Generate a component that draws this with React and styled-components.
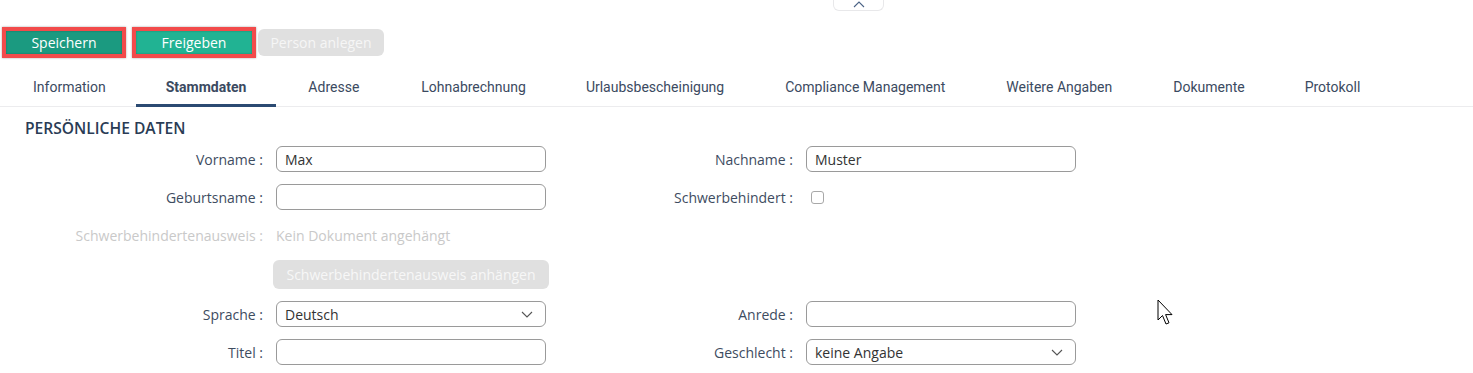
import React from "react";
import styled, { createGlobalStyle, css } from "styled-components";

const GlobalStyle = createGlobalStyle`
  body {
    margin: 0;
    background: #fff;
    font-family: "Open Sans", "Liberation Sans", sans-serif;
  }
`;

const Page = styled.div`
  position: relative;
  width: 1473px;
  height: 373px;
  overflow: hidden;
  background: #fff;
`;

const CollapseRow = styled.div`
  height: 12px;
  display: flex;
`;

const CollapseToggle = styled.div`
  margin-left: 833px;
  width: 51px;
  height: 11px;
  border: 1px solid #e8e8ea;
  border-top: none;
  border-radius: 0 0 6px 6px;
  display: flex;
  justify-content: center;
  align-items: flex-end;
  box-sizing: border-box;
  padding-bottom: 2px;
`;

const Toolbar = styled.div`
  margin-top: 15px;
  padding-left: 2px;
  display: flex;
  align-items: center;
  height: 31px;
`;

const Highlight = styled.div`
  border: 4px solid #f24b4b;
  box-shadow: 0 0 2px rgba(0, 0, 0, 0.35);
  margin-right: ${(p) => p.$gap || 0}px;
  display: flex;
`;

const ActionButton = styled.button`
  border: none;
  font-family: "Open Sans", "Liberation Sans", sans-serif;
  font-size: 14px;
  color: #fff;
  height: 23px;
  width: ${(p) => p.$width}px;
  padding: 0;
  cursor: pointer;
  background: ${(p) => p.$bg};
  box-shadow: inset 0 0 2px rgba(0, 0, 0, 0.3);
  ${(p) =>
    p.$disabled &&
    css`
      background: #e0e0e0;
      color: #f6f6f6;
      box-shadow: none;
      border-radius: 6px;
      height: 27px;
    `}
`;

const Tabs = styled.div`
  margin-top: 12px;
  display: flex;
  padding-left: 3px;
  border-bottom: 1px solid #ececee;
  height: 37px;
  box-sizing: border-box;
`;

const Tab = styled.div`
  font-family: Roboto, "Liberation Sans", sans-serif;
  font-size: 14px;
  color: #3b4a61;
  font-weight: ${(p) => (p.$active ? 700 : 400)};
  padding: 0 30px;
  margin-right: ${(p) => p.$mr}px;
  display: flex;
  align-items: center;
  border-bottom: 3px solid ${(p) => (p.$active ? "#2b4a72" : "transparent")};
  margin-bottom: -1px;
  white-space: nowrap;
`;

const Section = styled.div`
  padding: 11px 0 0 25px;
`;

const SectionTitle = styled.h2`
  margin: 0 0 8px;
  font-size: 15.6px;
  font-weight: 600;
  color: #2a3c55;
  line-height: 20px;
`;

const FormGrid = styled.div`
  margin-left: -25px;
  display: grid;
  grid-template-columns: 263px 270px 234px 270px;
  column-gap: 13px;
  row-gap: 12px;
`;

const Label = styled.div`
  font-size: 14px;
  color: ${(p) => (p.$muted ? "#c9c9c9" : "#3e4c5f")};
  text-align: right;
  display: flex;
  align-items: center;
  justify-content: flex-end;
  height: 26px;
  white-space: nowrap;
`;

const Field = styled.div`
  height: 26px;
  border: 1px solid #9a9a9a;
  border-radius: 6px;
  box-sizing: border-box;
  display: flex;
  align-items: center;
  justify-content: space-between;
  padding: 0 12px 0 8px;
  font-size: 14px;
  color: #333;
`;

const Hint = styled.div`
  font-size: 14px;
  color: #c9c9c9;
  display: flex;
  align-items: center;
  height: 26px;
`;

const Checkbox = styled.div`
  width: 13px;
  height: 13px;
  border: 1px solid #a8a8a8;
  border-radius: 3px;
  box-sizing: border-box;
  margin: 7px 0 0 5px;
`;

const AttachButton = styled.button`
  margin-left: -3px;
  width: 276px;
  height: 29px;
  border: none;
  border-radius: 6px;
  background: #e0e0e0;
  color: #f7f7f7;
  font-family: "Open Sans", "Liberation Sans", sans-serif;
  font-size: 14px;
  padding: 0;
`;

const Empty = styled.div``;

const Cursor = styled.svg`
  position: absolute;
  left: 1157px;
  top: 299px;
`;

const Chevron = ({ up }) => (
  <svg width="12" height="7" viewBox="0 0 12 7">
    <path
      d={up ? "M1 6 L6 1 L11 6" : "M1 1 L6 6 L11 1"}
      fill="none"
      stroke={up ? "#4a6285" : "#555"}
      strokeWidth="1.1"
    />
  </svg>
);

const tabs = [
  { name: "Information", mr: 0 },
  { name: "Stammdaten", mr: 2, active: true },
  { name: "Adresse", mr: 2 },
  { name: "Lohnabrechnung", mr: 0 },
  { name: "Urlaubsbescheinigung", mr: 1 },
  { name: "Compliance Management", mr: 1 },
  { name: "Weitere Angaben", mr: 1 },
  { name: "Dokumente", mr: 0 },
  { name: "Protokoll", mr: 0 },
];

export default function App() {
  return (
    <Page>
      <GlobalStyle />
      <CollapseRow>
        <CollapseToggle>
          <Chevron up />
        </CollapseToggle>
      </CollapseRow>
      <Toolbar>
        <Highlight $gap={6}>
          <ActionButton $width={116} $bg="#1b9a80">
            Speichern
          </ActionButton>
        </Highlight>
        <Highlight $gap={2}>
          <ActionButton $width={116} $bg="#21b393">
            Freigeben
          </ActionButton>
        </Highlight>
        <ActionButton $width={126} $disabled>
          Person anlegen
        </ActionButton>
      </Toolbar>
      <Tabs>
        {tabs.map((t) => (
          <Tab key={t.name} $active={t.active} $mr={t.mr}>
            {t.name}
          </Tab>
        ))}
      </Tabs>
      <Section>
        <SectionTitle>PERSÖNLICHE DATEN</SectionTitle>
        <FormGrid>
          <Label>Vorname :</Label>
          <Field>Max</Field>
          <Label>Nachname :</Label>
          <Field>Muster</Field>

          <Label>Geburtsname :</Label>
          <Field />
          <Label>Schwerbehindert :</Label>
          <Empty>
            <Checkbox />
          </Empty>

          <Label $muted>Schwerbehindertenausweis :</Label>
          <Hint>Kein Dokument angehängt</Hint>
          <Empty />
          <Empty />

          <Empty />
          <Empty>
            <AttachButton>Schwerbehindertenausweis anhängen</AttachButton>
          </Empty>
          <Empty />
          <Empty />

          <Label>Sprache :</Label>
          <Field>
            Deutsch
            <Chevron />
          </Field>
          <Label>Anrede :</Label>
          <Field />

          <Label>Titel :</Label>
          <Field />
          <Label>Geschlecht :</Label>
          <Field>
            keine Angabe
            <Chevron />
          </Field>
        </FormGrid>
      </Section>
      <Cursor width="18" height="28" viewBox="0 0 18 28">
        <path
          d="M1 1 L1 21 L5.5 16.5 L9 25 L12 23.8 L8.6 15.6 L15 15.6 Z"
          fill="#fff"
          stroke="#000"
          strokeWidth="1"
          strokeLinejoin="miter"
        />
      </Cursor>
    </Page>
  );
}
